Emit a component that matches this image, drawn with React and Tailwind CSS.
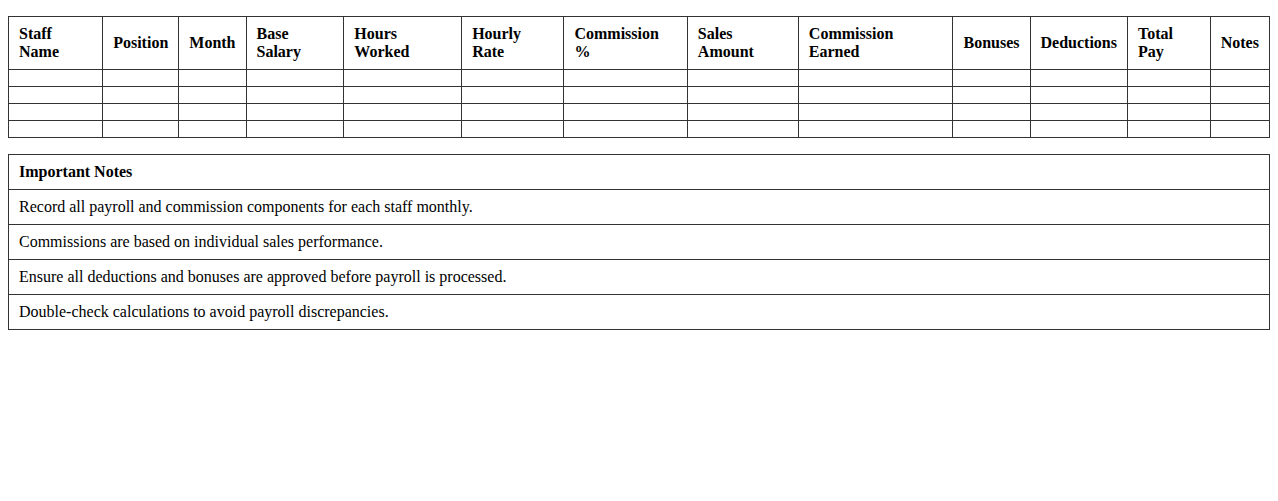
import React from 'react';

const headers = [
  'Staff Name',
  'Position',
  'Month',
  'Base Salary',
  'Hours Worked',
  'Hourly Rate',
  'Commission %',
  'Sales Amount',
  'Commission Earned',
  'Bonuses',
  'Deductions',
  'Total Pay',
  'Notes'
];

const notes = [
  'Record all payroll and commission components for each staff monthly.',
  'Commissions are based on individual sales performance.',
  'Ensure all deductions and bonuses are approved before payroll is processed.',
  'Double-check calculations to avoid payroll discrepancies.'
];

const App = () => {
  return (
    <div className="px-2 pt-4 bg-white text-black font-['Liberation_Serif',serif] text-[16px] leading-[18px]">
      {/* payroll sheet */}
      <table className="w-full border-collapse mb-4">
        <thead>
          <tr>
            {headers.map(h => (
              <th key={h} className="border border-[#333] py-2 px-[10px] text-left font-bold">
                {h}
              </th>
            ))}
          </tr>
        </thead>
        <tbody>
          {[0, 1, 2, 3].map(r => (
            <tr key={r}>
              {headers.map(h => (
                <td key={h} className="border border-[#333] py-2 px-[10px]"></td>
              ))}
            </tr>
          ))}
        </tbody>
      </table>

      {/* notes */}
      <table className="w-full border-collapse">
        <tbody>
          <tr>
            <td className="border border-[#333] py-2 px-[10px] font-bold">Important Notes</td>
          </tr>
          {notes.map(n => (
            <tr key={n}>
              <td className="border border-[#333] py-2 px-[10px]">{n}</td>
            </tr>
          ))}
        </tbody>
      </table>
    </div>
  );
};

export default App;
